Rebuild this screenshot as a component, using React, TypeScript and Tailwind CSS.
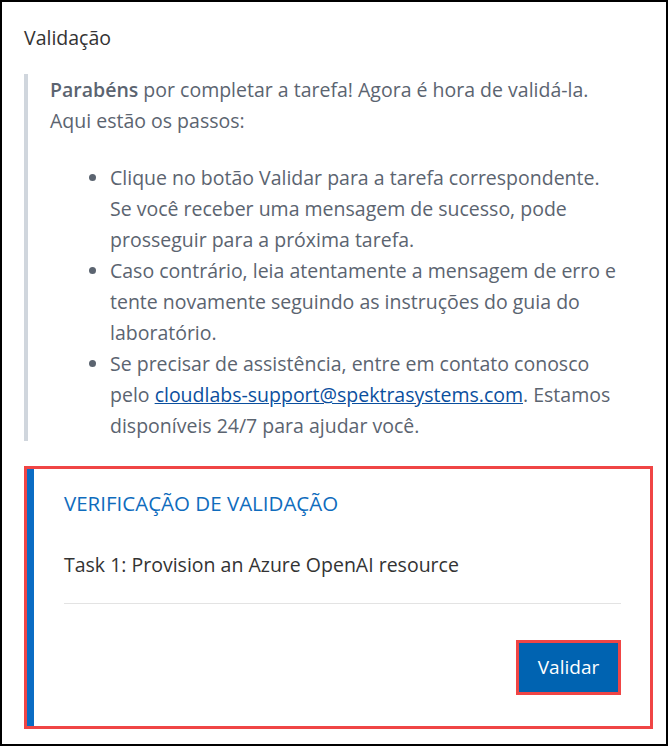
export default function App() {
  return (
    <div className="w-[668px] h-[746px] border-2 border-black bg-white overflow-hidden font-['Open_Sans',_'Noto_Sans',_sans-serif]">
      <div className="pl-[22px] pr-[13px] pt-[22px]">
        <h2 className="text-[19.5px] leading-[28px] text-[#333333]">Validação</h2>

        <blockquote className="mt-[22px] border-l-4 border-[#d0d6dd] pl-[22px] text-[19.5px] leading-[31px] text-[#5b6470]">
          <p>
            <strong className="font-semibold">Parabéns</strong> por completar a tarefa! Agora é hora de validá-la.
            <br />
            Aqui estão os passos:
          </p>
          <ul className="mt-[26px] pl-[60px] list-disc marker:text-[#5b6470]">
            <li>
              Clique no botão Validar para a tarefa correspondente.
              <br />
              Se você receber uma mensagem de sucesso, pode
              <br />
              prosseguir para a próxima tarefa.
            </li>
            <li>
              Caso contrário, leia atentamente a mensagem de erro e
              <br />
              tente novamente seguindo as instruções do guia do
              <br />
              laboratório.
            </li>
            <li>
              Se precisar de assistência, entre em contato conosco
              <br />
              pelo{' '}
              <a href="#" className="text-[#0b4f9e] underline">
                cloudlabs-support@spektrasystems.com
              </a>
              . Estamos
              <br />
              disponíveis 24/7 para ajudar você.
            </li>
          </ul>
        </blockquote>

        <div className="mt-[25px] w-[629px] h-[263px] border-[3px] border-[#f04545]">
          <div className="h-full border-l-[7px] border-[#0a6cc4] pl-[30px] pr-[29px] pt-[18px]">
            <h3 className="text-[20.5px] leading-[32px] text-[#0f6cbd]">VERIFICAÇÃO DE VALIDAÇÃO</h3>
            <p className="mt-[30px] text-[19.5px] leading-[32px] text-[#333333]">Task 1: Provision an Azure OpenAI resource</p>
            <div className="mt-[22px] border-t border-[#e3e3e3]" />
            <div className="mt-[36px] flex justify-end">
              <button className="border-[3px] border-[#f04545] bg-[#0063b1] w-[105px] h-[55px] text-white text-[19px]">
                Validar
              </button>
            </div>
          </div>
        </div>
      </div>
    </div>
  );
}
